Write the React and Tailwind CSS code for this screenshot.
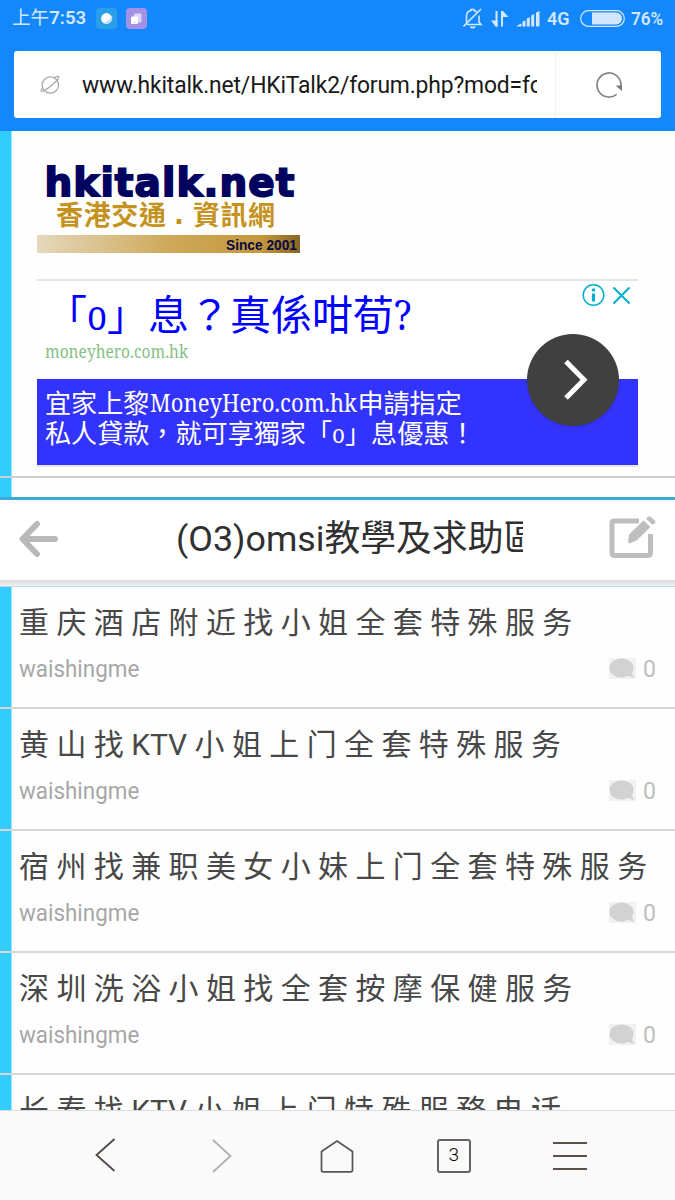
import React from "react";

const threads = [
  "重 庆 酒 店 附 近 找 小 姐 全 套 特 殊 服 务",
  "黄 山 找 KTV 小 姐 上 门 全 套 特 殊 服 务",
  "宿 州 找 兼 职 美 女 小 妹 上 门 全 套 特 殊 服 务",
  "深 圳 洗 浴 小 姐 找 全 套 按 摩 保 健 服 务",
  "长 春 找 KTV 小 姐 上 门 特 殊 服 務 电 话",
];

function StatusBar() {
  return (
    <div className="flex h-[37px] items-center pl-3 pr-[11px] text-[18px] leading-[37px] text-[#d3e7ff]">
      <span className="w-[84px] whitespace-nowrap text-[18.6px] font-semibold"><span className="font-normal">上午</span>7:53</span>
      <svg className="block" width="52" height="21" viewBox="0 0 52 21">
        <rect width="21" height="21" rx="4" fill="#2a9ee9" />
        <circle cx="10.5" cy="10.5" r="5.4" fill="#fff" />
        <path d="M6.500 15c4.500-.5 8.500-4 9.500-8 1.500 6-3 10.500-9.500 8z" fill="#b7dcf8" />
        <rect x="30" width="21" height="21" rx="4" fill="#a391e6" />
        <rect x="38" y="5.500" width="7.500" height="9" rx="1" fill="#ddd5fa" />
        <rect x="35" y="8.500" width="7" height="7.500" rx="1" fill="#fff" />
        <circle cx="38.500" cy="14" r=".6" fill="#a391e6" />
      </svg>
      <div className="flex-1" />
      <svg className="block" width="80" height="22" viewBox="0 0 80 22" fill="none" stroke="#d3e7ff" strokeWidth="1.600">
        <path d="M.5 18.500L18 1M3.500 14.500V8c0-3 2-5 4.500-5.500V1.500h3v1c1 .2 1.800.6 2.600 1.300M16 7.500V14l2 2.500H4M7.500 18.500c.8 1.500 3.700 1.500 4.500 0" />
        <path d="M33.500 3v15.500M39 3v15.500" strokeWidth="2" />
        <path d="M34.500 18.500h-2L28 12.500h6.500zM38 3h2L45.500 9H38z" fill="#d3e7ff" stroke="none" />
        <path d="M54 18.500v-1l4.500-2v3zM59.500 18.500v-5l3-1v6zM63.800 18.500v-8l3-1.200v9.200zM68.200 18.500V7.500l3-1.500v12.500zM73 18.500v-14L76.500 3v15.500z" fill="#d3e7ff" stroke="none" />
      </svg>
      <span className="ml-[4px] w-[24px] font-semibold">4G</span>
      <svg className="ml-[9px] block" width="46" height="17" viewBox="0 0 46 17">
        <rect x=".7" y=".7" width="43.600" height="15.600" rx="7.800" fill="none" stroke="#d3e7ff" strokeWidth="1.200" />
        <path d="M12 2.500h24a6 6 0 0 1 0 12H12z" fill="#d3e7ff" />
      </svg>
      <span className="ml-[5px] w-[33px] font-semibold"><span className="inline-block origin-left scale-x-[.95]">76%</span></span>
    </div>
  );
}

function AddressBar() {
  return (
    <div className="mx-[14px] mt-[14px] flex h-[67px] items-center rounded-[3px] bg-white">
      <svg className="ml-[26px] block" width="20" height="20" viewBox="0 0 20 20" fill="none" stroke="#a6a6a6" strokeWidth="1.200">
        <circle cx="10.300" cy="10" r="8.200" />
        <path d="M14 2.800c2-1.200 4-1.700 4.600-1.100.8 1.200-2.500 5.200-7.400 9S2 17.300 1.200 16.200c-.4-.6.4-2.200 1.800-3.800" />
      </svg>
      <div className="ml-[22px] w-[455px] overflow-hidden whitespace-nowrap pt-[2px] text-[23px] leading-[34px] tracking-[-0.16px] text-[#191919]"><span className="inline-block origin-left scale-x-[.994]">www.hkitalk.net/HKiTalk2/forum.php?mod=fo</span></div>
      <div className="ml-[18px] flex h-full flex-1 items-center justify-center border-l border-[#f0f0f0]">
        <svg className="ml-px block" width="28" height="28" viewBox="0 0 28 28">
          <path d="M21.600 23.300A12 12 0 1 1 26 14v3" fill="none" stroke="#858585" strokeWidth="1.700" />
          <path d="M20.500 14.500H27V20z" fill="#777" />
        </svg>
      </div>
    </div>
  );
}

function Logo() {
  return (
    <svg className="block" width="263" height="92" viewBox="0 0 263 92">
      <defs>
        <linearGradient id="gold">
          <stop offset="0" stopColor="#e5d8bd" />
          <stop offset=".5" stopColor="#cfa95a" />
          <stop offset=".85" stopColor="#c4983c" />
          <stop offset="1" stopColor="#876526" />
        </linearGradient>
      </defs>
      <text x="7.500" y="34.500" textLength="250" lengthAdjust="spacing" fill="#02025f" stroke="#02025f" strokeWidth="1.800" className="font-['DejaVu_Sans','Liberation_Sans',sans-serif] text-[39px] font-bold">hkitalk.net</text>
      <g fill="#c59220" className="font-['Noto_Sans_CJK_TC',sans-serif] text-[27px] font-bold">
        <text x="19" y="64" textLength="110">香港交通</text>
        <rect x="139.500" y="82" width="0" height="0" />
        <text x="137" y="62.500" className="font-['DejaVu_Sans',sans-serif] text-[26px]">.</text>
        <text x="156" y="64" textLength="82">資訊網</text>
      </g>
      <rect y="74" width="263" height="18" fill="url(#gold)" />
      <text x="189" y="89" textLength="71" lengthAdjust="spacingAndGlyphs" fill="#080840" className="font-['Liberation_Sans',sans-serif] text-[15px] font-bold">Since 2001</text>
    </svg>
  );
}

const serif = "font-['Noto_Serif','Liberation_Serif','Noto_Sans_CJK_TC',serif]";

function Ad() {
  return (
    <div className={"relative ml-[37px] mt-[26px] h-[188px] w-[601px] border-y-2 border-[#e5e5e5] bg-white " + serif}>
      <div className="h-[60px] whitespace-nowrap pl-[9px] pt-[3px] text-[41px] leading-[60px] text-[#00f]">「<span className="inline-block w-[20px] origin-left scale-x-[.85]">o</span>」息？真係咁荀<span className="inline-block origin-left scale-x-[.9]">?</span></div>
      <div className="h-[38px] pl-[8px] pt-[2px] text-[18px] leading-[20px] text-[#84c184]"><svg className="block overflow-visible" width="143" height="22"><text y="15" textLength="143" lengthAdjust="spacingAndGlyphs" fill="#84c184">moneyhero.com.hk</text></svg></div>
      <div className="h-[86px] whitespace-nowrap bg-[#3333fe] pl-[8px] pt-[9px] text-[26.1px] leading-[30px] text-white">
        <div className="flex h-[30px]"><span>宜家上黎</span><svg className="block overflow-visible" width="208" height="30"><text x="1" y="24" textLength="207" lengthAdjust="spacingAndGlyphs" fill="#fff">MoneyHero.com.hk</text></svg><span>申請指定</span></div>
        <div>私人貸款，就可享獨家「<span className="inline-block w-[13px] origin-left scale-x-[.86]">o</span>」息優惠！</div>
      </div>
      <svg className="absolute left-[544px] top-[2px]" width="52" height="24" viewBox="0 0 52 24" fill="none" stroke="#00aecd">
        <circle cx="12.500" cy="12" r="10.300" strokeWidth="1.500" />
        <path d="M12.500 10.500v8" strokeWidth="3" />
        <circle cx="12.500" cy="7" r="1.800" fill="#00aecd" stroke="none" />
        <path d="M32.500 4.500l16 16M48.500 4.500l-16 16" strokeWidth="2" />
      </svg>
      <div className="absolute left-[490px] top-[53px] flex size-[92px] items-center justify-center rounded-full bg-[#404040] shadow-sm">
        <svg className="mr-px mb-px" width="30" height="44" viewBox="0 0 30 44" fill="none" stroke="#fff" strokeWidth="5"><path d="M8 3.500l18 18.200L8 40" /></svg>
      </div>
    </div>
  );
}

function Thread({ title }) {
  return (
    <div className="h-[122px] shrink-0 border-b-2 border-[#d6d6d6] pl-[19px] pr-[19px] pt-[14px]">
      <div className="h-[46px] whitespace-nowrap text-[29.96px] leading-[44px] text-[#484848]">{title}</div>
      <div className="flex h-[46px] items-center text-[23px] leading-[46px] text-[#a7a7a7]">
        <span className="inline-block origin-left scale-x-[.974]">waishingme</span>
        <svg className="mb-[3px] ml-auto" width="27" height="21" viewBox="0 0 27 21">
          <rect width="27" height="21" fill="#f1f1f1" />
          <ellipse cx="12.500" cy="10" rx="12" ry="9.500" fill="#d2d2d2" />
          <path d="M17 17l8 3-3-7z" fill="#d2d2d2" />
        </svg>
        <span className="ml-[7px] text-[#bebebe]">0</span>
      </div>
    </div>
  );
}

function BottomBar() {
  return (
    <div className="flex h-[90px] shrink-0 items-center justify-around border-t border-[#dcdcdc] bg-[#fafafa] px-[47px]">
      <svg width="40" height="40" viewBox="0 0 40 40" fill="none" stroke="#514946" strokeWidth="1.800"><path d="M29.500 3L11.500 19l18 16" /></svg>
      <svg width="40" height="40" viewBox="0 0 40 40" fill="none" stroke="#b0b0b0" strokeWidth="1.800"><path d="M12 4l17.500 16L12 36" /></svg>
      <svg width="40" height="40" viewBox="0 0 40 40" fill="none" stroke="#555" strokeWidth="1.700"><path d="M4.500 15.500L20 5 35.500 15.500v18.500c0 1.300-.5 1.800-1.800 1.800H6.300c-1.300 0-1.800-.5-1.800-1.800z" /></svg>
      <div className="flex size-[40px] items-center justify-center"><div className="flex size-[34px] items-center justify-center rounded-[3px] border-2 border-[#676262] pb-[3px] text-[19px] font-light leading-none text-black">3</div></div>
      <svg width="40" height="40" viewBox="0 0 40 40" fill="none" stroke="#5b504c" strokeWidth="2"><path d="M3 7h34M3 20h34M3 33h34" /></svg>
    </div>
  );
}

export default function App() {
  return (
    <div className="flex h-[1200px] w-[675px] flex-col overflow-hidden bg-[#fefefe] font-['Roboto','Noto_Sans_CJK_SC',sans-serif]">
      <header className="h-[131px] shrink-0 bg-[#1487fa]">
        <StatusBar />
        <AddressBar />
      </header>
      <section className="h-[347px] shrink-0 border-b-2 border-[#cbcfd3] bg-[linear-gradient(90deg,#33ccff_11px,#fefefe_12px)] pt-[30px]">
        <div className="ml-[37px]"><Logo /></div>
        <Ad />
      </section>
      <div className="h-[19px] shrink-0 bg-[linear-gradient(90deg,#33ccff_11px,#fefefe_12px)]" />
      <div className="flex h-[90px] shrink-0 flex-col border-t-[3px] border-[#3ea9d6]">
        <div className="flex h-[80px] items-center bg-white pl-[19px] pr-[19px]">
          <svg className="mb-[3px]" width="40" height="38" viewBox="0 0 40 38" fill="none" stroke="#b9b9b9" strokeWidth="6" strokeLinecap="round" strokeLinejoin="round"><path d="M18 4L3.500 19 18 34M4 19h32" /></svg>
          <div className="mb-[2px] ml-[117px] w-[347px] overflow-hidden whitespace-nowrap font-['Roboto','Noto_Sans_CJK_TC',sans-serif] text-[35.8px] leading-[56px] text-[#303030]">(O3)omsi教學及求助區</div>
          <svg className="mb-[5px] ml-auto" width="47" height="43" viewBox="0 0 47 43" fill="none" stroke="#bebebe">
            <path d="M30 5H5.500Q3 5 3 7.500V37q0 2.500 2.500 2.500H39q2.500 0 2.500-2.500V18" strokeWidth="5" />
            <path d="M19.500 22.500L20.500 18 34.500 4.500l7 6.500L27.500 24.500l-7 3q-2-.5-1-5zM37 2.500l2-1.800q1.500-.8 2.500 0L46 4.500q.8 1.500 0 2.500L43.500 9z" fill="#bebebe" stroke="none" />
          </svg>
        </div>
        <div className="h-[7px] border-b border-[#bbdbea] bg-linear-to-b from-[#dadada] to-[#f1f1f1]" />
      </div>
      <main className="flex min-h-0 flex-1 flex-col overflow-hidden bg-[linear-gradient(90deg,#33ccff_11px,#fefefe_12px)]">
        {threads.map((title) => <Thread key={title} title={title} />)}
      </main>
      <BottomBar />
    </div>
  );
}
